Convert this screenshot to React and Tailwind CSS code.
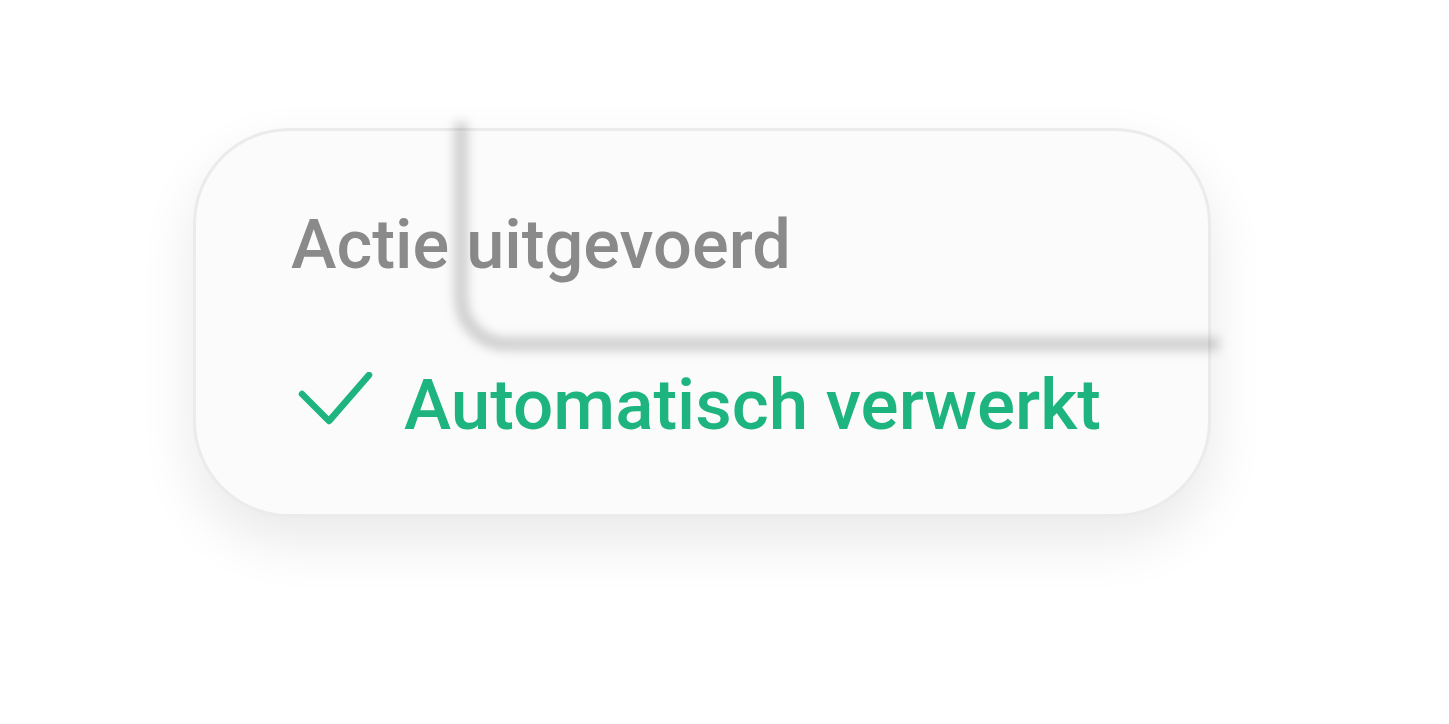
const Check = () => (
  <svg width="76" height="56" viewBox="0 0 76 56" fill="none" className="shrink-0">
    <path
      d="M4 22 L31 49 L71 3"
      stroke="#1db47f"
      strokeWidth="6.5"
      strokeLinecap="round"
      strokeLinejoin="round"
    />
  </svg>
);

const Connector = () => (
  <svg
    className="absolute left-0 top-0 pointer-events-none"
    width="1449"
    height="724"
    viewBox="0 0 1449 724"
    fill="none"
  >
    <defs>
      <filter id="soft" x="-20%" y="-20%" width="140%" height="140%">
        <feGaussianBlur stdDeviation="6" />
      </filter>
    </defs>
    <path
      d="M461 127 V298 A46 46 0 0 0 507 344 H1214"
      stroke="#000"
      strokeOpacity="0.22"
      strokeWidth="11"
      strokeLinecap="round"
      filter="url(#soft)"
    />
  </svg>
);

const App = () => {
  return (
    <div
      className="relative w-[1449px] h-[724px] overflow-hidden bg-white"
      style={{ fontFamily: "Roboto, 'Liberation Sans', sans-serif" }}
    >
      <div className="pl-[193px] pt-[128px]">
        <div className="w-[1018px] h-[389px] rounded-[96px] border-[3px] border-[#ebebeb] bg-[#fbfbfb] shadow-[0_24px_56px_rgba(0,0,0,0.09)] pl-[95px] pt-[80px]">
          <h1 className="text-[68.5px] leading-none font-medium text-[#8a8a8a]">
            Actie uitgevoerd
          </h1>
          <div className="mt-[89px] flex items-center gap-[30px]">
            <div className="pl-[7px] pb-[8px]">
              <Check />
            </div>
            <span className="text-[71px] leading-none font-medium text-[#1db47f]">
              Automatisch verwerkt
            </span>
          </div>
        </div>
      </div>
      <Connector />
    </div>
  );
};

export default App;
